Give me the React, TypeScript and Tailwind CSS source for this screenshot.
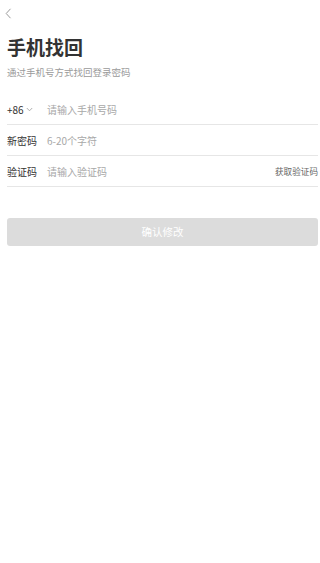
import React from "react";

export default function App() {
  const font = { fontFamily: '"Noto Sans CJK SC", "Noto Sans", sans-serif' };
  return (
    <div className="w-[320px] h-[563px] bg-white pl-[7px] pr-[2px]" style={font}>
      <div className="pt-[8px]">
        <svg width="7" height="11" viewBox="0 0 7 11" className="-ml-[2px] block">
          <path d="M5.5 0.8 L1.2 5.5 L5.5 10.2" fill="none" stroke="#9a9a9a" strokeWidth="1" />
        </svg>
      </div>
      <div className="mt-[16px] text-[19px] leading-[24px] font-semibold text-[#333333]">手机找回</div>
      <div className="mt-[6px] text-[9.5px] leading-[14px] text-[#9a9a9a]">通过手机号方式找回登录密码</div>
      <div className="mt-[15px]">
        <div className="h-[31px] flex items-center border-b border-[#e6e6e6]">
          <div className="w-[40px] flex items-center text-[10px] text-[#333333]">
            <span>+86</span>
            <svg width="7" height="5" viewBox="0 0 7 5" className="ml-[2px]">
              <path d="M0.8 1 L3.5 3.8 L6.2 1" fill="none" stroke="#9a9a9a" strokeWidth="0.8" />
            </svg>
          </div>
          <span className="text-[10px] text-[#a8a8a8]">请输入手机号码</span>
        </div>
        <div className="h-[31px] flex items-center border-b border-[#e6e6e6]">
          <div className="w-[40px] text-[10px] text-[#333333]">新密码</div>
          <span className="text-[10px] text-[#a8a8a8]">6-20个字符</span>
        </div>
        <div className="h-[31px] flex items-center border-b border-[#e6e6e6]">
          <div className="w-[40px] text-[10px] text-[#333333]">验证码</div>
          <span className="flex-1 text-[10px] text-[#a8a8a8]">请输入验证码</span>
          <span className="text-[8.6px] text-[#666666]">获取验证码</span>
        </div>
      </div>
      <div className="mt-[31px] h-[28px] rounded-[3px] bg-[#dcdcdc] flex items-center justify-center text-[10.5px] text-white">
        确认修改
      </div>
    </div>
  );
}
